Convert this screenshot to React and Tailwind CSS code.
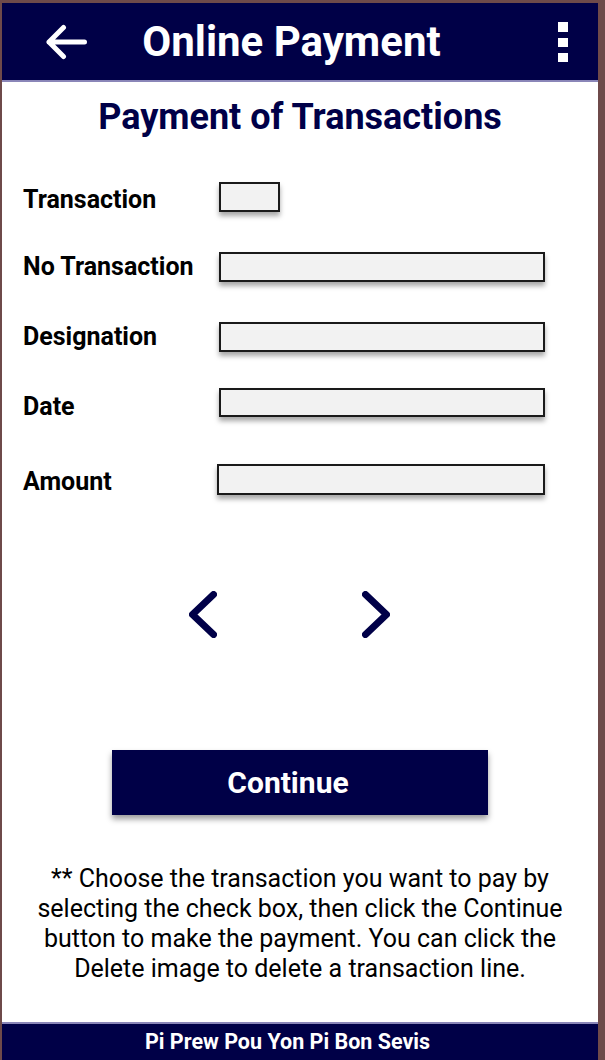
import React from "react";

const Row = ({ label, boxW = "w-[326px]", boxH = "h-[30px]", mt, labelShift = "", boxShift = "" }) => (
  <div className={`flex items-center ${mt}`}>
    <div className={`w-[217px] pl-[21px] text-[25px] font-bold leading-[30px] text-black ${labelShift}`}>{label}</div>
    <div
      className={`${boxW} ${boxH} ${boxShift} border-2 border-[#1a1a1a] bg-[#f2f2f2] shadow-[0_4px_5px_rgba(0,0,0,0.35)]`}
    />
  </div>
);

export default function App() {
  return (
    <div
      className="w-[605px] h-[1060px] bg-[#6e4a4a] pl-[2px] pt-[3px] pr-[7px] overflow-hidden"
      style={{ fontFamily: "Roboto, 'Noto Sans', sans-serif" }}
    >
      <div className="flex h-full flex-col bg-white">
        <header className="flex h-[79px] items-center bg-[#000047] border-b-2 border-[#8a86b8] pl-[44px] pr-[30px]">
          <svg width="41" height="36" viewBox="0 0 41 36" fill="none" stroke="white" strokeWidth="5" strokeLinecap="round" strokeLinejoin="round">
            <path d="M38.5 18H3M17.5 3.5L3 18l14.5 14.5" />
          </svg>
          <h1 className="flex-1 pr-[62px] text-center text-[42px] font-bold leading-none text-white">Online Payment</h1>
          <div className="flex flex-col gap-[6px] pt-[1px]">
            <div className="h-[10px] w-[10px] bg-white" />
            <div className="h-[9px] w-[10px] bg-white" />
            <div className="h-[9px] w-[10px] bg-white" />
          </div>
        </header>

        <h2 className="mt-[15px] text-center text-[36px] font-bold leading-[40px] text-[#000048]">Payment of Transactions</h2>

        <div className="flex flex-col">
          <Row label="Transaction" boxW="w-[61px]" mt="mt-[45px]" labelShift="translate-y-[3px]" />
          <Row label="No Transaction" mt="mt-[40px]" />
          <Row label="Designation" mt="mt-[40px]" />
          <Row label="Date" boxH="h-[29px]" mt="mt-[35px]" labelShift="translate-y-[5px]" />
          <Row label="Amount" boxW="w-[328px]" boxH="h-[31px]" mt="mt-[47px]" labelShift="translate-y-[2px]" boxShift="-ml-[2px]" />
        </div>

        <div className="mt-[96px] flex justify-center gap-[145px] pr-[22px]">
          <svg width="28" height="47" viewBox="0 0 28 47" fill="none" stroke="#000048" strokeWidth="7" strokeLinecap="round" strokeLinejoin="round">
            <path d="M24.5 3.5L3.5 23.5l21 20" />
          </svg>
          <svg width="28" height="47" viewBox="0 0 28 47" fill="none" stroke="#000048" strokeWidth="7" strokeLinecap="round" strokeLinejoin="round">
            <path d="M3.5 3.5l21 20-21 20" />
          </svg>
        </div>

        <div className="mt-[112px] flex justify-center">
          <button className="h-[65px] w-[376px] bg-[#000047] pr-[24px] text-[30px] font-bold text-white shadow-[0_4px_6px_rgba(0,0,0,0.4)]">
            Continue
          </button>
        </div>

        <p className="mt-[49px] px-[22px] text-center text-[25px] leading-[30px] text-black">
          ** Choose the transaction you want to pay by selecting the check box, then click the Continue button to make the payment. You can click the Delete image to delete a transaction line.
        </p>

        <footer className="mt-auto flex h-[38px] items-center justify-center border-t-2 border-[#8a86b8] bg-[#000047] pr-[25px] text-[21.5px] font-bold text-white">
          Pi Prew Pou Yon Pi Bon Sevis
        </footer>
      </div>
    </div>
  );
}
